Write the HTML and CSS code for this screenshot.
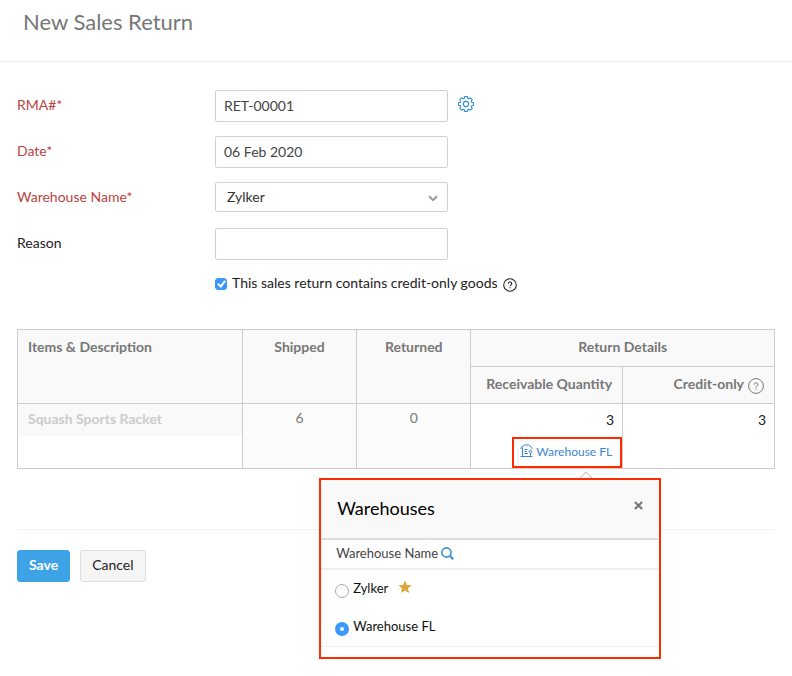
FILE: index.html
```html
<!DOCTYPE html>
<html lang="en">
<head>
<meta charset="utf-8">
<meta name="viewport" content="width=device-width, initial-scale=1">
<title>New Sales Return</title>
<link rel="stylesheet" href="styles.css">
</head>
<body>
<header class="page-header">
  <h1>New Sales Return</h1>
</header>
<main class="page">
  <form class="return-form">
    <div class="fields">
      <label class="label required" for="rma">RMA#*</label>
      <div class="control">
        <input class="field" id="rma" type="text" value="RET-00001">
        <button class="icon-button" type="button" aria-label="Configure numbering">
          <svg class="gear" viewBox="0 0 16 16" fill="none" stroke="currentColor" stroke-width="1.100" stroke-linejoin="round">
            <path d="M6.600 .6h2.800l.4 1.700 1 .4 1.500-.9 1.900 1.900-.9 1.500.4 1 1.700.4v2.800l-1.700.4-.4 1 .9 1.500-1.900 1.900-1.500-.9-1 .4-.4 1.700H6.600l-.4-1.700-1-.4-1.500.9-1.900-1.900.9-1.500-.4-1L.6 9.400V6.600l1.700-.4.4-1-.9-1.500 1.900-1.900 1.500.9 1-.4z"/>
            <circle cx="8" cy="8" r="2.600"/>
          </svg>
        </button>
      </div>
      <label class="label required" for="date">Date*</label>
      <div class="control"><input class="field" id="date" type="text" value="06 Feb 2020"></div>
      <label class="label required" for="warehouse">Warehouse Name*</label>
      <div class="control">
        <div class="select-wrap">
          <select class="field select" id="warehouse"><option>Zylker</option><option>Warehouse FL</option></select>
          <svg class="chevron" viewBox="0 0 10 7" fill="none" stroke="currentColor" stroke-width="2"><path d="M1 1.200l4 4 4-4"/></svg>
        </div>
      </div>
      <label class="label" for="reason">Reason</label>
      <div class="control"><input class="field" id="reason" type="text"></div>
      <div class="credit">
        <input class="checkbox" id="credit" type="checkbox" checked>
        <label for="credit">This sales return contains credit-only goods</label>
        <svg class="help" viewBox="0 0 16 16" fill="none" stroke="currentColor" stroke-width="1.200"><circle cx="8" cy="8" r="7.200"/><path d="M6 6.600a2 1.900 0 1 1 3 1.500c-.7.4-1 .6-1 1.300M8 10.500v1.300"/></svg>
      </div>
    </div>

    <table class="items">
      <colgroup><col class="col-item"><col class="col-count"><col class="col-count"><col class="col-qty"><col class="col-qty"></colgroup>
      <thead>
        <tr>
          <th class="left" rowspan="2">Items &amp; Description</th>
          <th rowspan="2">Shipped</th>
          <th rowspan="2">Returned</th>
          <th colspan="2">Return Details</th>
        </tr>
        <tr>
          <th class="right">Receivable Quantity</th>
          <th class="right"><span class="with-help">Credit-only
            <svg class="help large" viewBox="0 0 16 16" fill="none" stroke="currentColor" stroke-width="1"><circle cx="8" cy="8" r="7.400"/><path d="M6.100 6.600a1.900 1.800 0 1 1 2.900 1.500c-.7.4-1 .6-1 1.300M8 10.400v1.200"/></svg></span></th>
        </tr>
      </thead>
      <tbody>
        <tr>
          <td><div class="item-name">Squash Sports Racket</div></td>
          <td class="count">6</td>
          <td class="count">0</td>
          <td>
            <div class="qty">3</div>
            <div class="picker">
              <a class="picker-link" href="#warehouses">
                <svg class="depot" viewBox="0 0 13 13" fill="none" stroke="currentColor" stroke-width="1"><path d="M1 5V3.500L4.500 1h4L12 3.500V5M2.500 3.500v9M.5 12.500h12M4.500 5.500h3M4.500 7.500h2.500M4.500 9.500h3.500M10.500 9v3"/><circle cx="10.500" cy="7.500" r="1.300"/></svg>
                Warehouse FL</a>
              <section class="popover" id="warehouses" aria-label="Warehouses">
                <svg class="arrow" viewBox="0 0 14 7" fill="#fff" stroke="#ccc" stroke-width="1.200"><path d="M1 7l6-6 6 6"/></svg>
                <div class="popover-head">
                  <h2>Warehouses</h2>
                  <button class="close" type="button" aria-label="Close"><svg viewBox="0 0 10 10" stroke="currentColor" stroke-width="2.400"><path d="M1 1l8 8M9 1L1 9"/></svg></button>
                </div>
                <div class="popover-search">Warehouse Name
                  <svg class="search" viewBox="0 0 13 13" fill="none" stroke="currentColor" stroke-width="1.600"><circle cx="5.500" cy="5.500" r="4.600"/><path d="M8.800 8.800l3.400 3.400" stroke-width="2.200"/></svg>
                </div>
                <div class="options">
                  <div class="option">
                    <input class="radio" type="radio" name="location" id="zylker">
                    <label for="zylker">Zylker</label>
                    <svg class="star" viewBox="0 0 14 14" fill="currentColor"><path d="M7 .5l1.900 4.400 4.700.4-3.600 3.100 1.100 4.700L7 10.600l-4.100 2.500L4 8.400.4 5.300l4.700-.4z"/></svg>
                  </div>
                  <div class="option">
                    <input class="radio" type="radio" name="location" id="florida" checked>
                    <label for="florida">Warehouse FL</label>
                  </div>
                </div>
              </section>
            </div>
          </td>
          <td><div class="qty">3</div></td>
        </tr>
      </tbody>
    </table>

    <div class="actions">
      <button class="button primary" type="submit">Save</button>
      <button class="button" type="button">Cancel</button>
    </div>
  </form>
</main>
</body>
</html>
```
FILE: styles.css
```css
* { box-sizing: border-box; }

body {
  margin: 0;
  background: #fff;
  color: #222;
  font-family: Lato, "Liberation Sans", sans-serif;
  font-size: 14px;
  line-height: 20px;
}

input, select, button { font: inherit; }
svg { display: block; flex: none; }

.page-header {
  padding: 7px 23px 24px;
  border-bottom: 1px solid #eee;
}

h1 {
  margin: 0;
  color: #777;
  font-size: 22px;
  font-weight: 400;
  line-height: 30px;
}

/* The bottom space leaves room for the open warehouse popover. */
.page { padding: 28px 17px 94px; }

.fields {
  display: grid;
  grid-template-columns: 198px 1fr;
  row-gap: 14px;
}

.label { line-height: 30px; }
.required { color: #b94442; }

.control {
  display: flex;
  gap: 10px;
  height: 32px;
}

.field {
  width: 233px;
  height: 32px;
  padding: 0 8px 1px;
  border: 1px solid #cfd1dc;
  border-radius: 2px;
  background: #fff;
  color: #444;
}

.select-wrap {
  position: relative;
  height: 30px;
}

.select {
  height: 30px;
  padding: 0 11px;
  appearance: none;
  color: #333;
}

.chevron {
  position: absolute;
  top: 13px;
  right: 10px;
  width: 10px;
  height: 7px;
  color: #999;
  pointer-events: none;
}

.icon-button {
  align-self: flex-start;
  margin: 0;
  padding: 6px 0;
  border: 0;
  background: none;
  color: #338fd0;
}

.gear { width: 16px; height: 16px; }

.credit {
  grid-column: 2;
  display: flex;
  align-items: flex-start;
  gap: 5px;
}

.credit label { line-height: 18px; }

.checkbox, .radio {
  appearance: none;
  flex: none;
  margin: 0;
  border: 1px solid #aaa;
  background: #fff;
}

.checkbox {
  display: grid;
  place-content: center;
  width: 12px;
  height: 12px;
  margin-top: 4px;
  border-radius: 3px;
}

.checkbox:checked {
  border-color: #3b99fc;
  background: #3b99fc;
}

.checkbox:checked::after {
  content: "";
  box-sizing: border-box;
  width: 5px;
  height: 8px;
  margin-bottom: 2px;
  border: solid #fff;
  border-width: 0 2px 2px 0;
  transform: rotate(38deg);
}

.help { width: 14px; height: 14px; margin-top: 4px; }
.help.large { width: 16px; height: 16px; }

.items {
  width: 100%;
  margin-top: 37px;
  border-collapse: collapse;
  table-layout: fixed;
}

.col-item { width: 29.7%; }
.col-count { width: 15.1%; }

.items th, .items td {
  padding: 0;
  border: 1px solid #ccc;
  vertical-align: top;
}

.items th {
  height: 37px;
  padding: 7px 10px 9px;
  background: #f9f9f9;
  color: #777;
  font-weight: 700;
  text-align: center;
}

.items .left { text-align: left; }
.items .right { text-align: right; }

.with-help {
  display: flex;
  justify-content: flex-end;
  gap: 4px;
}

.item-name {
  padding: 5px 10px 7px;
  background: #f9f9f9;
  color: #ccc;
  font-weight: 700;
}

.items .count {
  padding-top: 4px;
  background: #fbfbfb;
  color: #777;
  text-align: center;
}

.qty {
  padding: 6px 8px 7px;
  text-align: right;
}

.picker {
  position: relative;
  width: 110px;
  margin-left: auto;
}

.picker-link {
  display: flex;
  align-items: flex-start;
  justify-content: flex-end;
  gap: 3px;
  height: 31px;
  padding: 3px 8px;
  border: 2px solid #ff2a00;
  color: #3a87cd;
  font-size: 12px;
  text-decoration: none;
  white-space: nowrap;
}

.depot { width: 13px; height: 13px; margin-top: 2px; }

.popover {
  position: absolute;
  top: calc(100% + 10px);
  right: -39px;
  width: 342px;
  border: 2px solid #ff2a00;
  background: #fff;
  color: #111;
}

.arrow {
  position: absolute;
  top: -9px;
  right: 66px;
  width: 14px;
  height: 7px;
}

.popover-head {
  display: flex;
  align-items: flex-start;
  justify-content: space-between;
  padding: 15px 16px 17px;
  border-bottom: 2px solid #ddd;
  background: #f9f9f9;
}

h2 {
  margin: 0;
  color: #000;
  font-size: 18px;
  font-weight: 400;
  line-height: 26px;
}

.close {
  margin: 0;
  padding: 6px 0;
  border: 0;
  background: none;
  color: #777;
}

.close svg { width: 9px; height: 9px; }

.popover-search {
  display: flex;
  align-items: center;
  gap: 3px;
  padding: 3px 15px 5px;
  border-bottom: 2px solid #eee;
  color: #444;
  font-size: 13px;
}

.search { width: 13px; height: 13px; color: #3c91d2; }

.options {
  margin-bottom: 10px;
  border-bottom: 1px solid #eee;
  font-size: 13px;
}

.option {
  display: flex;
  align-items: flex-start;
  gap: 4px;
  height: 38px;
  padding: 8px 14px;
}

.radio {
  width: 14px;
  height: 14px;
  margin-top: 6px;
  border-radius: 50%;
}

.radio:checked {
  border: 5px solid #3b99fc;
}

.star {
  width: 14px;
  height: 14px;
  margin: 2px 0 0 6px;
  color: #dba53a;
}

.actions {
  display: flex;
  gap: 10px;
  margin-top: 60px;
  padding-top: 20px;
  border-top: 1px solid #f0f0f0;
}

.button {
  height: 32px;
  padding: 0 11px 2px;
  border: 1px solid #ddd;
  border-radius: 3px;
  background: #f5f5f5;
  color: #222;
}

.primary {
  border-color: #3da2e6;
  background: #3da2e6;
  color: #fff;
  font-weight: 700;
}
```
